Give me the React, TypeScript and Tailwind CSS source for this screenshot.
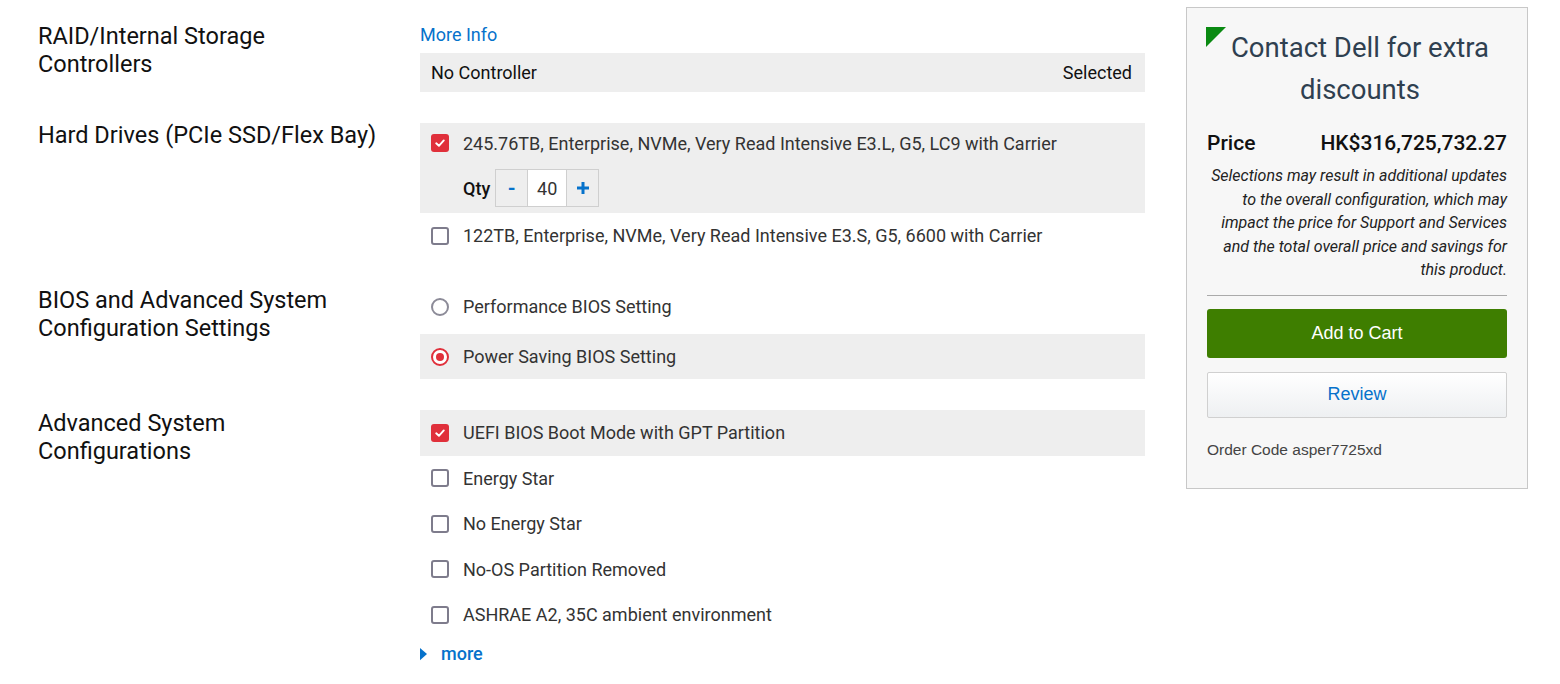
import React from "react";

const font = "font-['Roboto',_'Noto_Sans',_sans-serif]";
const arial = "font-['Liberation_Sans',_Arial,_sans-serif]";

function CheckBox({ checked }: { checked?: boolean }) {
  if (checked) {
    return (
      <span className="flex h-[18px] w-[18px] shrink-0 items-center justify-center rounded-[3px] bg-[#e0303b]">
        <svg viewBox="0 0 12 12" className="h-[12px] w-[12px]">
          <path d="M2.2 6.3 L4.9 8.8 L9.8 3.4" fill="none" stroke="#fff" strokeWidth="1.9" strokeLinecap="round" strokeLinejoin="round" />
        </svg>
      </span>
    );
  }
  return <span className="h-[18px] w-[18px] shrink-0 rounded-[3px] border-2 border-[#7e7c8c] bg-white" />;
}

function Radio({ checked }: { checked?: boolean }) {
  if (checked) {
    return (
      <span className="flex h-[18px] w-[18px] shrink-0 items-center justify-center rounded-full border-[2.5px] border-[#e0303b] bg-white">
        <span className="h-[8px] w-[8px] rounded-full bg-[#e0303b]" />
      </span>
    );
  }
  return <span className="h-[18px] w-[18px] shrink-0 rounded-full border-[2.5px] border-[#8c8b98] bg-white" />;
}

function OptionRow({ label, selected, radio, className = "" }: { label: string; selected?: boolean; radio?: boolean; className?: string }) {
  return (
    <div className={`flex h-[45.5px] items-center gap-[14px] pl-[11px] ${selected ? "bg-[#eeeeee]" : ""} ${className}`}>
      {radio ? <Radio checked={selected} /> : <CheckBox checked={selected} />}
      <span className="text-[18px] text-[#333]">{label}</span>
    </div>
  );
}

function Section({ title, className = "", children }: { title: React.ReactNode; className?: string; children: React.ReactNode }) {
  return (
    <div className={`flex items-start ${className}`}>
      <h2 className="w-[382px] shrink-0 text-[23.5px] leading-[28px] text-[#111]">{title}</h2>
      <div className="w-[725px]">{children}</div>
    </div>
  );
}

export default function App() {
  return (
    <div className={`flex min-h-[684px] bg-white pt-[7px] pl-[38px] ${font}`}>
      <div className="pt-[15px]">
        <Section title={<>RAID/Internal Storage<br />Controllers</>}>
          <div className="mt-[2px]">
            <a className="text-[18px] leading-[22px] text-[#0672cb]">More Info</a>
            <div className="mt-[5px] flex h-[39px] items-center justify-between bg-[#eeeeee] px-[11px] pr-[13px] text-[18px] text-[#111]">
              <span>No Controller</span>
              <span>Selected</span>
            </div>
          </div>
        </Section>

        <Section title="Hard Drives (PCIe SSD/Flex Bay)" className="mt-[29px]">
          <div className="mt-[2px]">
            <div className="bg-[#eeeeee] pl-[11px] pt-[9px] pb-[6px]">
              <div className="flex h-[22px] items-center gap-[14px]">
                <CheckBox checked />
                <span className="text-[18px] text-[#333]">245.76TB, Enterprise, NVMe, Very Read Intensive E3.L, G5, LC9 with Carrier</span>
              </div>
              <div className="mt-[15px] flex items-center gap-[5px] pl-[32px]">
                <span className="text-[18px] font-medium text-[#111]">Qty</span>
                <div className="flex h-[38px] border border-[#cfcfcf]">
                  <button className="flex w-[31px] items-center justify-center bg-[#eeeeee] text-[20px] font-bold text-[#0672cb]">-</button>
                  <div className="flex w-[40px] items-center justify-center border-x border-[#cfcfcf] bg-white text-[18px] text-[#333]">40</div>
                  <button className="flex w-[31px] items-center justify-center bg-[#eeeeee]">
                    <svg viewBox="0 0 14 14" className="h-[14px] w-[14px]">
                      <path d="M7 1 V13 M1 7 H13" stroke="#0672cb" strokeWidth="3" />
                    </svg>
                  </button>
                </div>
              </div>
            </div>
            <OptionRow label="122TB, Enterprise, NVMe, Very Read Intensive E3.S, G5, 6600 with Carrier" className="h-[45px]" />
          </div>
        </Section>

        <Section title={<>BIOS and Advanced System<br />Configuration Settings</>} className="mt-[28px]">
          <div className="-mt-[2px]">
            <OptionRow radio label="Performance BIOS Setting" className="h-[45px]" />
            <OptionRow radio selected label="Power Saving BIOS Setting" className="mt-[5px] h-[45px]" />
          </div>
        </Section>

        <Section title={<>Advanced System<br />Configurations</>} className="mt-[30px]">
          <div className="mt-[1px]">
            <OptionRow selected label="UEFI BIOS Boot Mode with GPT Partition" className="h-[44px]" />
            <OptionRow label="Energy Star" />
            <OptionRow label="No Energy Star" />
            <OptionRow label="No-OS Partition Removed" />
            <OptionRow label="ASHRAE A2, 35C ambient environment" />
            <a className="mt-[5px] flex items-center gap-[14px] text-[18px] font-medium leading-[22px] text-[#0672cb]">
              <svg viewBox="0 0 8 14" className="h-[14px] w-[7px]">
                <path d="M0 0 L8 7 L0 14 Z" fill="#0672cb" />
              </svg>
              more
            </a>
          </div>
        </Section>
      </div>

      <aside className="relative ml-[41px] h-[482px] w-[342px] self-start border border-[#c8c8c8] bg-[#f7f7f7] px-[20px] pt-[19px]">
        <svg viewBox="0 0 20 20" className="absolute left-[19px] top-[19px] h-[20px] w-[20px]">
          <path d="M0 0 H20 L0 20 Z" fill="#0a8a12" />
        </svg>
        <h3 className="pl-[6px] text-center text-[27.5px] leading-[42px] text-[#2f4050]">Contact Dell for extra<br />discounts</h3>
        <div className="mt-[18px] flex items-center justify-between text-[21px] font-medium leading-[28px] text-[#111]">
          <span>Price</span>
          <span>HK$316,725,732.27</span>
        </div>
        <p className="mt-[7px] text-right text-[16px] italic leading-[23.5px] text-[#222]">
          Selections may result in additional updates to the overall configuration, which may impact the price for Support and Services and the total overall price and savings for this product.
        </p>
        <div className="mt-[13px] h-px bg-[#aaaaaa]" />
        <button className={`mt-[13px] flex h-[49px] w-full items-center justify-center rounded-[3px] bg-[#3e7e00] text-[18px] text-white ${arial}`}>Add to Cart</button>
        <button className={`mt-[14px] flex h-[46px] w-full items-center justify-center rounded-[2px] border border-[#d0d0d0] bg-gradient-to-b from-white to-[#eef0f2] text-[18px] font-medium text-[#0672cb] ${arial}`}>Review</button>
        <p className={`mt-[22px] text-[15.5px] leading-[20px] text-[#444] ${arial}`}>Order Code asper7725xd</p>
      </aside>
    </div>
  );
}
